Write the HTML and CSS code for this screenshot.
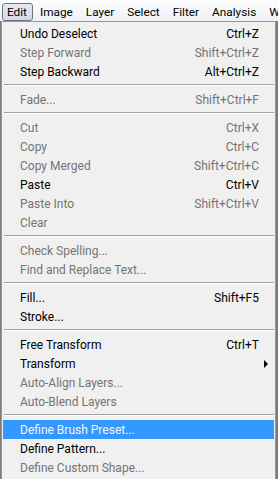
FILE: index.html
```html
<!DOCTYPE html>
<html lang="en">
<head>
    <meta charset="UTF-8">
    <title>Edit Menu</title>
    <link rel="stylesheet" href="styles.css">
</head>
<body>

<div class="menubar">
    <span class="menubar-item active">Edit</span>
    <span class="menubar-item">Image</span>
    <span class="menubar-item">Layer</span>
    <span class="menubar-item">Select</span>
    <span class="menubar-item">Filter</span>
    <span class="menubar-item">Analysis</span>
    <span class="menubar-item">Window</span>
</div>

<div class="menu">
    <div class="item"><span>Undo Deselect</span><span class="key">Ctrl+Z</span></div>
    <div class="item off"><span>Step Forward</span><span class="key">Shift+Ctrl+Z</span></div>
    <div class="item"><span>Step Backward</span><span class="key">Alt+Ctrl+Z</span></div>
    <div class="sep"></div>
    <div class="item off"><span>Fade...</span><span class="key">Shift+Ctrl+F</span></div>
    <div class="sep"></div>
    <div class="item off"><span>Cut</span><span class="key">Ctrl+X</span></div>
    <div class="item off"><span>Copy</span><span class="key">Ctrl+C</span></div>
    <div class="item off"><span>Copy Merged</span><span class="key">Shift+Ctrl+C</span></div>
    <div class="item"><span>Paste</span><span class="key">Ctrl+V</span></div>
    <div class="item off"><span>Paste Into</span><span class="key">Shift+Ctrl+V</span></div>
    <div class="item off"><span>Clear</span><span class="key"></span></div>
    <div class="sep"></div>
    <div class="item off"><span>Check Spelling...</span><span class="key"></span></div>
    <div class="item off"><span>Find and Replace Text...</span><span class="key"></span></div>
    <div class="sep"></div>
    <div class="item"><span>Fill...</span><span class="key">Shift+F5</span></div>
    <div class="item"><span>Stroke...</span><span class="key"></span></div>
    <div class="sep"></div>
    <div class="item"><span>Free Transform</span><span class="key">Ctrl+T</span></div>
    <div class="item"><span>Transform</span><span class="key"></span><span class="arrow"></span></div>
    <div class="item off"><span>Auto-Align Layers...</span><span class="key"></span></div>
    <div class="item off"><span>Auto-Blend Layers</span><span class="key"></span></div>
    <div class="sep"></div>
    <div class="item hover"><span>Define Brush Preset...</span><span class="key"></span></div>
    <div class="item"><span>Define Pattern...</span><span class="key"></span></div>
    <div class="item off"><span>Define Custom Shape...</span><span class="key"></span></div>
</div>

</body>
</html>
```

FILE: styles.css
```css
body {
    margin: 0;
    font-family: Roboto, "Noto Sans", sans-serif;
    font-size: 12px;
    background-color: #7c7c7c;
    overflow: hidden;
}
.menubar {
    display: flex;
    height: 21px;
    padding-left: 2px;
    background: linear-gradient(#fdfdfe, #eef1f5);
    white-space: nowrap;
    overflow: hidden;
}
.menubar-item {
    display: flex;
    align-items: center;
    height: 16px;
    margin-top: 3px;
    padding: 0 5px 0 4px;
    margin-right: 2px;
    border: 1px solid transparent;
    border-radius: 3px;
    color: #000;
    font-size: 11.8px;
}
.menubar-item.active {
    border-color: #6f747b;
    background: linear-gradient(#e6e9ee, #d4d9e0);
}
.menu {
    width: 271px;
    margin-left: 1px;
    padding: 2px 1px;
    border: 1px solid #979797;
    background-color: #f0f0f0;
}
.item {
    display: grid;
    grid-template-columns: 1fr auto 15px;
    align-items: center;
    height: 19px;
    padding-left: 17px;
    color: #000;
}
.item.off {
    color: #747474;
}
.item.hover {
    background-color: #3399ff;
    color: #eef4fb;
}
.key {
    grid-column: 2;
    text-align: right;
}
.arrow {
    grid-column: 3;
    width: 0;
    height: 0;
    margin-left: 5px;
    border-top: 4px solid transparent;
    border-bottom: 4px solid transparent;
    border-left: 4px solid #000;
}
.sep {
    height: 9px;
    margin-left: 1px;
    box-sizing: border-box;
    padding-top: 3px;
}
.sep::before {
    content: "";
    display: block;
    border-top: 1px solid #a0a0a0;
    border-bottom: 1px solid #ffffff;
}
```
